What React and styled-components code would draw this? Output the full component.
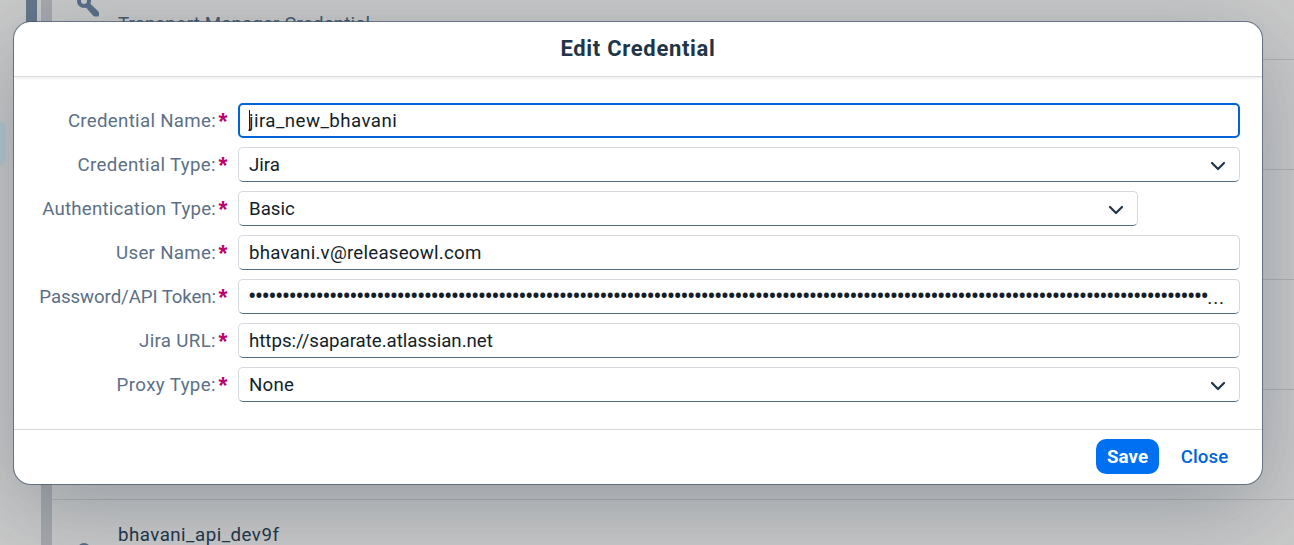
import React from "react";
import styled, { createGlobalStyle } from "styled-components";

const Global = createGlobalStyle`
  * { box-sizing: border-box; }
  body { margin: 0; overflow: hidden; font-family: Roboto, "Liberation Sans", sans-serif; font-size: 18.7px; color: #131e29; }
`;
const Page = styled.div`
  width: 1294px; height: 545px; display: flex; overflow: hidden; background: #cacaca; position: relative;
`;
const Side = styled.div`width: 26px; display: flex; flex-direction: column; padding-top: 121px;`;
const SideItem = styled.div`width: 6px; height: 44px; background: #b5c8d1; border-radius: 0 8px 8px 0;`;
const Scroll = styled.div`width: 15px;`;
const Thumb = styled.div`width: 11px; height: 200px; background: #64768a;`;
const Gutter = styled.div`width: 11px; background: #a6a9ae;`;
const List = styled.div`flex: 1; display: flex; flex-direction: column; margin-top: -50px;`;
const ListRow = styled.div`
  height: 110px; flex: none; border-bottom: 1px solid #b1b2b3; display: flex; padding-left: 25px; gap: 17px;
`;
const IconCell = styled.div`width: 24px; padding-top: ${(p) => p.$top}px;`;
const RowText = styled.div`
  padding-top: ${(p) => p.$top}px; line-height: 24px; white-space: nowrap; letter-spacing: ${(p) => p.$ls}px;
  color: ${(p) => p.$color};
`;
const Dialog = styled.div`
  position: absolute; left: 14px; top: 22px; width: 1248px; height: 462px;
  background: #fff; border-radius: 17px; display: flex; flex-direction: column;
  box-shadow: 0 0 0 1px rgba(70,88,108,.72), 0 22px 88px rgba(34,53,72,.32);
`;
const Header = styled.header`
  height: 55px; flex: none; display: flex; align-items: center; justify-content: center;
  border-bottom: 1px solid #d9d9d9; box-shadow: 0 2px 3px rgba(0,0,0,.06);
`;
const Title = styled.h1`
  margin: 0; padding-bottom: 2px; font-size: 22px; font-weight: 700; letter-spacing: ${(p) => p.$ls}px; color: #223548;
`;
const Form = styled.div`flex: 1; display: flex; flex-direction: column; gap: 9px; padding: 26px 22px 0 0;`;
const Row = styled.div`display: flex; height: 35px; align-items: center;`;
const Label = styled.label`
  width: 202px; text-align: right; color: #5b7086; white-space: nowrap; letter-spacing: ${(p) => p.$ls || 0}px;
`;
const Star = styled.span`width: 22px; padding-left: 2.5px; color: #ba066c; font: 700 23px/24px "Liberation Sans"; height: 21px;`;
const Field = styled.div`
  width: ${(p) => p.$w || 1002}px; height: 35px; padding: 0 ${(p) => (p.$focus ? 9 : 10)}px;
  display: flex; align-items: center; justify-content: space-between; border-radius: 5px;
  border: ${(p) => (p.$focus ? "2px solid #0064d9" : "1px solid #d3d9df")};
  border-bottom-color: ${(p) => (p.$focus ? "#0064d9" : "#556b82")};
`;
const Value = styled.span`white-space: nowrap; letter-spacing: ${(p) => p.$ls || 0}px; display: flex; align-items: center;`;
const Caret = styled.span`width: 1px; height: 21px; margin-right: -1px; background: #131e29;`;
const Dots = styled.span`font-size: 25px; line-height: 24px; letter-spacing: -1.68px; margin-left: -1px;`;
const Ellipsis = styled.span`font-size: 19px; letter-spacing: 0.9px; padding-top: 1px;`;
const Footer = styled.footer`
  height: 55px; flex: none; border-top: 1px solid #d9d9d9; display: flex; justify-content: flex-end;
  padding: 9px 23px 0 0; gap: 11px;
`;
const Button = styled.button`
  width: ${(p) => p.$w}px; height: 35px; border: 0; border-radius: 10px; padding: 0;
  font: ${(p) => (p.$primary ? 700 : 500)} 18.7px Roboto, sans-serif; letter-spacing: ${(p) => p.$ls}px;
  background: ${(p) => (p.$primary ? "#0070f2" : "transparent")};
  color: ${(p) => (p.$primary ? "#fff" : "#0064d9")};
`;
const ChevronSvg = styled.svg`margin: 2px 3px 0 0;`;

const Chevron = () => (
  <ChevronSvg width="16" height="10" viewBox="0 0 16 10" fill="none">
    <path d="M2 2L8 8L14 2" stroke="#223548" strokeWidth="2.2" strokeLinecap="round" strokeLinejoin="round" />
  </ChevronSvg>
);
const KeyIcon = () => (
  <svg width="24" height="28" viewBox="0 0 24 28" fill="none">
    <circle cx="7" cy="11" r="5" stroke="#5a6f87" strokeWidth="4" />
    <path d="M8.5 17L16 25.5Q16.6 26.5 18 26.5H21Q22 26.5 22 25V23Q22 22 21 21L12 12.5Z" fill="#5a6f87" />
  </svg>
);

const fields = [
  { label: "Credential Name:", value: "jira_new_bhavani", focus: true, ls: 0.3, vs: 0.45 },
  { label: "Credential Type:", value: "Jira", select: true, ls: 0.35 },
  { label: "Authentication Type:", value: "Basic", select: true, w: 900, ls: 0.2 },
  { label: "User Name:", value: "bhavani.v@releaseowl.com", ls: 0.3, vs: 0.24 },
  { label: "Password/API Token:", dots: 142, ls: -0.1 },
  { label: "Jira URL:", value: "https://saparate.atlassian.net", ls: 0.35, vs: -0.03 },
  { label: "Proxy Type:", value: "None", select: true, ls: 0.4, vs: 0.25 },
];

export default function App() {
  return (
    <>
      <Global />
      <Page>
        <Side><SideItem /></Side>
        <Scroll><Thumb /></Scroll>
        <Gutter />
        <List>
          <ListRow>
            <IconCell $top={40}><KeyIcon /></IconCell>
            <RowText $top={62} $ls={0.15} $color="#44586d">Transport Manager Credential</RowText>
          </ListRow>
          <ListRow /><ListRow /><ListRow /><ListRow />
          <ListRow>
            <IconCell $top={39}><KeyIcon /></IconCell>
            <RowText $top={23} $ls={0.48} $color="#223548">bhavani_api_dev9f</RowText>
          </ListRow>
        </List>
        <Dialog>
          <Header><Title $ls={0.68}>Edit Credential</Title></Header>
          <Form>
            {fields.map((f) => (
              <Row key={f.label}>
                <Label $ls={f.ls}>{f.label}</Label>
                <Star>*</Star>
                <Field $focus={f.focus} $w={f.w}>
                  <Value $ls={f.vs}>
                    {f.focus && <Caret />}
                    {f.dots ? <><Dots>{"•".repeat(f.dots)}</Dots><Ellipsis>...</Ellipsis></> : f.value}
                  </Value>
                  {f.select && <Chevron />}
                </Field>
              </Row>
            ))}
          </Form>
          <Footer>
            <Button $primary $w={63} $ls={0.1}>Save</Button>
            <Button $w={69} $ls={0.1}>Close</Button>
          </Footer>
        </Dialog>
      </Page>
    </>
  );
}
